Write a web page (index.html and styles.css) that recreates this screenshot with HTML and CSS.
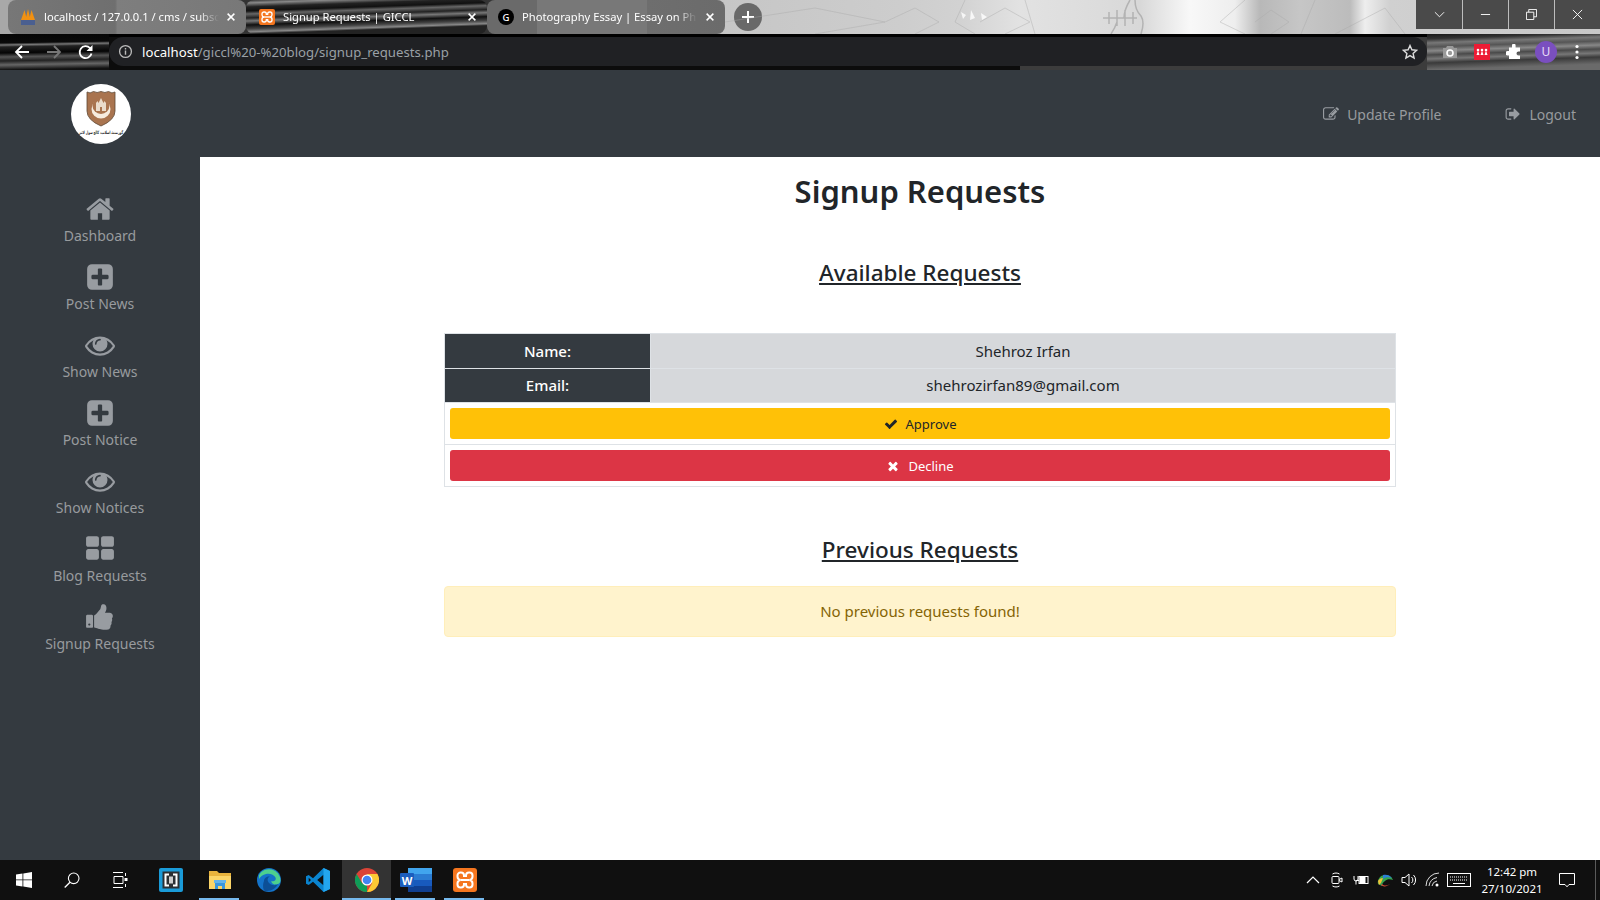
FILE: index.html
```html
<!DOCTYPE html>
<html lang="en">
<head>
  <meta charset="UTF-8" />
  <title>Signup Requests | GICCL</title>
  <link rel="stylesheet" href="styles.css">
</head>
<body>
  <!-- icon set -->
  <svg class="sprite" xmlns="http://www.w3.org/2000/svg">
    <symbol id="i-home" viewBox="0 0 1792 1792"><path d="M1472 992v480q0 26-19 45t-45 19h-384v-384h-256v384h-384q-26 0-45-19t-19-45v-480q0-1 .5-3t.5-3l575-474 575 474q1 2 1 6zm223-69l-62 74q-8 9-21 11h-3q-13 0-21-7l-692-577-692 577q-12 8-24 7-13-2-21-11l-62-74q-8-10-7-23.5t11-21.5l719-599q32-26 76-26t76 26l244 204v-195q0-14 9-23t23-9h192q14 0 23 9t9 23v408l219 182q10 8 11 21.5t-7 23.5z"/></symbol>
    <symbol id="i-plus" viewBox="0 0 1792 1792"><path d="M1408 960v-128q0-26-19-45t-45-19h-320v-320q0-26-19-45t-45-19h-128q-26 0-45 19t-19 45v320h-320q-26 0-45 19t-19 45v128q0 26 19 45t45 19h320v320q0 26 19 45t45 19h128q26 0 45-19t19-45v-320h320q26 0 45-19t19-45zm256-544v960q0 119-84.5 203.5t-203.5 84.5h-960q-119 0-203.5-84.5t-84.5-203.5v-960q0-119 84.5-203.5t203.5-84.5h960q119 0 203.5 84.5t84.5 203.5z"/></symbol>
    <symbol id="i-eye" viewBox="0 0 1792 1792"><path d="M1664 960q-152-236-381-353 61 104 61 225 0 185-131.5 316.5t-316.5 131.5-316.5-131.5-131.5-316.5q0-121 61-225-229 117-381 353 133 205 333.5 326.5t434.5 121.5 434.5-121.5 333.5-326.5zm-720-384q0-20-14-34t-34-14q-125 0-214.5 89.5t-89.5 214.5q0 20 14 34t34 14 34-14 14-34q0-86 61-147t147-61q20 0 34-14t14-34zm848 384q0 34-20 69-140 230-376.5 368.5t-499.5 138.5-499.5-139-376.5-368q-20-35-20-69t20-69q140-229 376.5-368t499.5-139 499.5 139 376.5 368q20 35 20 69z"/></symbol>
    <symbol id="i-grid" viewBox="0 0 1792 1792"><path d="M832 1024v384q0 52-38 90t-90 38h-512q-52 0-90-38t-38-90v-384q0-52 38-90t90-38h512q52 0 90 38t38 90zm0-768v384q0 52-38 90t-90 38h-512q-52 0-90-38t-38-90v-384q0-52 38-90t90-38h512q52 0 90 38t38 90zm896 768v384q0 52-38 90t-90 38h-512q-52 0-90-38t-38-90v-384q0-52 38-90t90-38h512q52 0 90 38t38 90zm0-768v384q0 52-38 90t-90 38h-512q-52 0-90-38t-38-90v-384q0-52 38-90t90-38h512q52 0 90 38t38 90z"/></symbol>
    <symbol id="i-thumb" viewBox="0 0 1792 1792"><path d="M320 1344q0-26-19-45t-45-19q-27 0-45.5 19t-18.5 45q0 27 18.5 45.5t45.5 18.5q26 0 45-18.5t19-45.5zm160-512v640q0 26-19 45t-45 19h-288q-26 0-45-19t-19-45v-640q0-26 19-45t45-19h288q26 0 45 19t19 45zm1184 0q0 86-55 149 15 44 15 76 3 76-43 137 17 56 0 117-15 57-54 94 9 112-49 181-64 76-197 78h-129q-66 0-144-15.5t-121.5-29-120.5-39.5q-123-43-158-44-26-1-45-19.5t-19-44.5v-641q0-25 18-43.5t43-20.5q24-2 76-59t101-121q68-87 101-120 18-18 31-48t17.5-48.5 13.5-60.5q7-39 12.5-61t19.5-52 34-50q19-19 45-19 46 0 82.5 10.5t60 26 40 40.5 24 45 12 50 5 45 .5 39q0 38-9.5 76t-19 60-27.5 56q-3 6-10 18t-11 22-8 24h277q78 0 135 57t57 135z"/></symbol>
    <symbol id="i-check" viewBox="0 0 1792 1792"><path d="M1671 566q0 40-28 68l-724 724-136 136q-28 28-68 28t-68-28l-136-136-362-362q-28-28-28-68t28-68l136-136q28-28 68-28t68 28l294 295 656-657q28-28 68-28t68 28l136 136q28 28 28 68z"/></symbol>
    <symbol id="i-times" viewBox="0 0 1792 1792"><path d="M1490 1322q0 40-28 68l-136 136q-28 28-68 28t-68-28l-294-294-294 294q-28 28-68 28t-68-28l-136-136q-28-28-28-68t28-68l294-294-294-294q-28-28-28-68t28-68l136-136q28-28 68-28t68 28l294 294 294-294q28-28 68-28t68 28l136 136q28 28 28 68t-28 68l-294 294 294 294q28 28 28 68z"/></symbol>
    <symbol id="i-edit" viewBox="0 0 1792 1792"><path d="M888 1184l116-116-152-152-116 116v56h96v96h56zm440-720q-16-16-33 1l-350 350q-17 17-1 33t33-1l350-350q17-17 1-33zm80 594v190q0 119-84.5 203.5t-203.5 84.5h-832q-119 0-203.5-84.5t-84.5-203.5v-832q0-119 84.5-203.5t203.5-84.5h832q63 0 117 25 15 7 18 23 3 17-9 29l-49 49q-14 14-32 8-23-6-45-6h-832q-66 0-113 47t-47 113v832q0 66 47 113t113 47h832q66 0 113-47t47-113v-126q0-13 9-22l64-64q15-15 35-7t20 29zm-96-738l288 288-672 672h-288v-288zm444 132l-92 92-288-288 92-92q28-28 68-28t68 28l152 152q28 28 28 68t-28 68z"/></symbol>
    <symbol id="i-logout" viewBox="0 0 1792 1792"><path d="M704 1440q0 4 1 20t.5 26.5-3 23.5-10 19.5-20.5 6.5h-320q-119 0-203.5-84.5t-84.5-203.5v-704q0-119 84.5-203.5t203.5-84.5h320q13 0 22.5 9.5t9.5 22.5q0 4 1 20t.5 26.5-3 23.5-10 19.5-20.5 6.5h-320q-66 0-113 47t-47 113v704q0 66 47 113t113 47h312l11.5 1 11.5 3 8 5.5 7 9 2 13.5zm928-544q0 26-19 45l-544 544q-19 19-45 19t-45-19-19-45v-288h-448q-26 0-45-19t-19-45v-384q0-26 19-45t45-19h448v-288q0-26 19-45t45-19 45 19l544 544q19 19 19 45z"/></symbol>
    <symbol id="i-close" viewBox="0 0 16 16"><path d="M3.500 3.500l9 9m0-9l-9 9" fill="none" stroke="currentColor" stroke-width="2"/></symbol>
    <symbol id="i-xampp" viewBox="0 0 24 24"><rect width="24" height="24" rx="3" fill="#f5761f"/><g fill="none" stroke="#fff" stroke-width="2"><path d="M11 9V7.500a3 3 0 0 0-3-3h-.5a3 3 0 0 0-3 3v1a3.500 3.500 0 0 0 3 3.500 3.500 3.500 0 0 0-3 3.500v1a3 3 0 0 0 3 3H8a3 3 0 0 0 3-3V15"/><path d="M13 9V7.500a3 3 0 0 1 3-3h.5a3 3 0 0 1 3 3v1a3.500 3.500 0 0 1-3 3.500 3.500 3.500 0 0 1 3 3.500v1a3 3 0 0 1-3 3H16a3 3 0 0 1-3-3V15"/><path d="M7.500 12h9"/></g></symbol>
  </svg>

  <div class="tabstrip">
    <svg class="strip-art" viewBox="0 0 692 34" preserveAspectRatio="none">
      <g fill="none" stroke="#a8a8a8" stroke-width="1" opacity=".4">
        <path d="M0 22L90 8l70 14-70 12M160 22l30-14 24 14-24 12M240 0l-10 22 20 12M255 22l25-14 25 14-25 12M300 0l10 34"/>
        <path d="M520 0l-25 22 25 12M530 22l16-12 18 12-18 12M590 0l-14 34M610 34l50-26 20 26"/>
      </g>
      <g fill="#ffffff" opacity=".8"><path d="M236 12l5 3-3 4zM246 10l4 8-5 2zM256 13l6 4-5 3z"/></g>
      <g fill="none" stroke="#9a9a9a" stroke-width="1.500" opacity=".6">
        <path d="M378 18h34M384 12v12M392 10v16M400 10v16M408 12v12M405 0q-6 10-6 18M410 0q0 10 6 16 4 6 0 18M386 34q4-6 6-12"/>
      </g>
    </svg>
    <div class="tab tab-first">
      <svg class="favicon" viewBox="0 0 16 16"><path d="M1 11L4.500 1 7 11zM5.500 11L8 0l2.500 11zM9 11l2.500-10L15 11z" fill="#f29111"/><rect x="1" y="11" width="14" height="5" fill="#4a5f90"/></svg>
      <span class="tab-title">localhost / 127.0.0.1 / cms / subscribers</span>
      <svg class="tab-close"><use href="#i-close"/></svg>
    </div>
    <div class="tab tab-active">
      <svg class="favicon"><use href="#i-xampp"/></svg>
      <span class="tab-title">Signup Requests | GICCL</span>
      <svg class="tab-close"><use href="#i-close"/></svg>
    </div>
    <div class="tab tab-third">
      <svg class="favicon" viewBox="0 0 16 16"><circle cx="8" cy="8" r="8" fill="#000"/><text x="8" y="11.500" class="favicon-g">G</text></svg>
      <span class="tab-title">Photography Essay | Essay on Photography</span>
      <svg class="tab-close"><use href="#i-close"/></svg>
    </div>
    <div class="new-tab">
      <svg viewBox="0 0 14 14"><path d="M7 1v12M1 7h12" stroke="#fff" stroke-width="2"/></svg>
    </div>
    <div class="win-controls">
      <div class="win-btn"><svg viewBox="0 0 12 12"><path d="M1 3.500l5 5 5-5" fill="none" stroke="#fff"/></svg></div>
      <div class="win-btn"><svg viewBox="0 0 12 12"><path d="M1 6h10" stroke="#fff"/></svg></div>
      <div class="win-btn"><svg viewBox="0 0 12 12"><path d="M.5 3.500h8v8h-8zM3 3.500v-3h8.500v8h-3" fill="none" stroke="#fff"/></svg></div>
      <div class="win-btn"><svg viewBox="0 0 12 12"><path d="M1 1l10 10m0-10L1 11" fill="none" stroke="#fff"/></svg></div>
    </div>
  </div>

  <div class="toolbar">
    <div class="nav-btns">
      <svg viewBox="0 0 16 16"><path d="M15 8H2m6-6L2 8l6 6" fill="none" stroke="#fff" stroke-width="1.800"/></svg>
      <svg viewBox="0 0 16 16"><path d="M1 8h13M8 2l6 6-6 6" fill="none" stroke="#777" stroke-width="1.800"/></svg>
      <svg viewBox="0 0 16 16"><path d="M13.500 9.500A6 6 0 1 1 12 4l1.500 1.500" fill="none" stroke="#fff" stroke-width="1.800"/><path d="M14.500 1v6h-6z" fill="#fff"/></svg>
    </div>
    <div class="omnibox">
      <svg class="info" viewBox="0 0 16 16"><circle cx="8" cy="8" r="6.300" fill="none" stroke="#bbb" stroke-width="1.400"/><path d="M8 7v4.500M8 4.300v1.500" stroke="#bbb" stroke-width="1.500"/></svg>
      <span class="url"><b>localhost</b>/giccl%20-%20blog/signup_requests.php</span>
      <svg class="star" viewBox="0 0 16 16"><path d="M8 1.500l1.900 4.300 4.700.5-3.500 3.100 1 4.600L8 11.600l-4.100 2.400 1-4.600-3.500-3.100 4.700-.5z" fill="none" stroke="#ddd" stroke-width="1.400"/></svg>
    </div>
    <div class="ext-icons">
      <svg viewBox="0 0 16 16"><path d="M1 4h3l1-2h6l1 2h3v10H1z" fill="#9a9a9a"/><circle cx="8" cy="9" r="3" fill="none" stroke="#fff" stroke-width="1.600"/></svg>
      <svg viewBox="0 0 16 16"><rect width="16" height="16" fill="#ec1c35"/><path d="M2.500 11L4 6.500 5.500 11zM6.500 11L8 6.500 9.500 11zM10.500 11L12 6.500 13.500 11z" fill="#fff"/><circle cx="4" cy="6" r="1.300" fill="#fff"/><circle cx="8" cy="6" r="1.300" fill="#fff"/><circle cx="12" cy="6" r="1.300" fill="#fff"/></svg>
      <svg viewBox="0 0 16 16"><path d="M6 1.500a1.800 1.800 0 0 1 3.600 0V3.500H14v4h-1.500a2 2 0 0 0 0 4H14V15H3v-3.500H1.500a2.200 2.200 0 0 1 0-4.400H3V3.500h3z" fill="#fff"/></svg>
      <div class="avatar">U</div>
      <svg class="dots" viewBox="0 0 4 16"><circle cx="2" cy="2.500" r="1.600" fill="#fff"/><circle cx="2" cy="8" r="1.600" fill="#fff"/><circle cx="2" cy="13.500" r="1.600" fill="#fff"/></svg>
    </div>
  </div>

  <div class="app">
    <aside class="sidebar">
      <div class="logo-wrap">
        <svg class="logo" viewBox="0 0 60 60">
          <circle cx="30" cy="30" r="30" fill="#fff"/>
          <path d="M16 8q3 2 6.500-.5 3.500 2 7.500 0 4 2 7.500 0Q41 10 44 8v19q0 9-14 15-14-6-14-15z" fill="#a9744f" stroke="#5d4632" stroke-width=".8"/>
          <circle cx="30" cy="25" r="9.500" fill="#f6ecdf"/>
          <circle cx="30" cy="21.500" r="8.500" fill="#a9744f"/>
          <path d="M25 27v-8l1.500-2 1 2 2.500-5 2.500 5 1-2 1.500 2v8z" fill="#eadccb"/>
          <path d="M29 27v-4h2v4z" fill="#a9744f"/>
          <text x="30" y="50" class="logo-text" textLength="44" lengthAdjust="spacingAndGlyphs">گورنمنٹ اسلامیہ کالج سول لائنز</text>
        </svg>
      </div>
      <nav class="side-nav">
        <a class="side-item"><svg><use href="#i-home"/></svg><span>Dashboard</span></a>
        <a class="side-item"><svg><use href="#i-plus"/></svg><span>Post News</span></a>
        <a class="side-item"><svg><use href="#i-eye"/></svg><span>Show News</span></a>
        <a class="side-item"><svg><use href="#i-plus"/></svg><span>Post Notice</span></a>
        <a class="side-item"><svg><use href="#i-eye"/></svg><span>Show Notices</span></a>
        <a class="side-item"><svg><use href="#i-grid"/></svg><span>Blog Requests</span></a>
        <a class="side-item"><svg><use href="#i-thumb"/></svg><span>Signup Requests</span></a>
      </nav>
    </aside>
    <div class="page">
      <header class="topbar">
        <a class="top-link"><svg><use href="#i-edit"/></svg>Update Profile</a>
        <a class="top-link"><svg><use href="#i-logout"/></svg>Logout</a>
      </header>
      <main class="content">
        <h1>Signup Requests</h1>
        <h2 class="available">Available Requests</h2>
        <table class="requests">
          <tr class="row-name">
            <th>Name:</th>
            <td>Shehroz Irfan</td>
          </tr>
          <tr class="row-email">
            <th>Email:</th>
            <td>shehrozirfan89@gmail.com</td>
          </tr>
          <tr class="row-approve">
            <td class="action" colspan="2"><button class="btn btn-approve" type="button"><svg><use href="#i-check"/></svg>Approve</button></td>
          </tr>
          <tr>
            <td class="action" colspan="2"><button class="btn btn-decline" type="button"><svg><use href="#i-times"/></svg>Decline</button></td>
          </tr>
        </table>
        <h2 class="previous">Previous Requests</h2>
        <div class="alert">No previous requests found!</div>
      </main>
    </div>
  </div>

  <footer class="taskbar">
    <div class="task-sys">
      <svg viewBox="0 0 16 16"><path d="M0 2.400l6.500-.9v6H0zM7.300 1.400L16 0v7.500H7.300zM0 8.300h6.500v6.200L0 13.600zM7.300 8.300H16V16l-8.700-1.400z" fill="#fff"/></svg>
      <svg viewBox="0 0 16 16"><circle cx="9.700" cy="6.300" r="5.300" fill="none" stroke="#fff" stroke-width="1.100"/><path d="M6 10.200L.7 15.500" stroke="#fff" stroke-width="1.300"/></svg>
      <svg viewBox="0 0 16 16"><path d="M1 .5h10M1 15.500h10M2 4.500h9v7H2zM13.500 1v3M13.500 12v3" fill="none" stroke="#fff"/><rect x="12.500" y="6" width="3" height="3" fill="#fff"/></svg>
    </div>
    <div class="task-apps">
      <div class="task-app">
        <svg viewBox="0 0 24 24"><rect width="24" height="24" rx="2" fill="#1a9bd8"/><rect x="3.500" y="3.500" width="17" height="17" fill="#2b2f33"/><path d="M10 6.500H6.500v11H10M14 6.500h3.500v11H14" fill="none" stroke="#fff" stroke-width="2"/><rect x="10" y="8.500" width="4" height="7" fill="#cfcfcf"/></svg>
      </div>
      <div class="task-app is-open">
        <svg viewBox="0 0 24 24"><path d="M1 3h8l2 2h12v16H1z" fill="#e8b33d"/><rect x="1" y="8" width="22" height="13" fill="#fbd568"/><path d="M7 21v-6h10v6h-3v-3h-4v3z" fill="#3a96dd"/><rect x="6" y="12" width="12" height="3" fill="#63b3ea"/></svg>
      </div>
      <div class="task-app">
        <svg viewBox="0 0 24 24"><circle cx="12" cy="12" r="12" fill="#1473c9"/><path d="M2 7a11.500 11.500 0 0 1 21.500 5.500c0 3-3 4.500-6 4-2-.4-3.500-2-3-3.500 3 1 5-1 4-3.500C17 7 13 5 9 6 6 6.700 3.500 8.500 2 11z" fill="#4dd08e"/><path d="M7 13c0-3 3-5 6-4.500-3.500 1-3 6 1 8 2 1 5 1 7-.5-2 4-6 7-11 7-2 0-3-.5-3-.5-1.500-3-1-7 0-9.500z" fill="#0c4f96"/></svg>
      </div>
      <div class="task-app">
        <svg viewBox="0 0 24 24"><path d="M17.500 0L24 3v18l-6.500 3L7 13.700 2.700 17 0 15.700V8.300L2.700 7 7 10.300zm0 6.800L11.200 12l6.300 5.200zM2.700 9.700v4.600L5 12z" fill="#0a84cf"/><path d="M17.500 0L24 3v18l-6.500 3z" fill="#23a6ef"/></svg>
      </div>
      <div class="task-app is-active">
        <svg viewBox="0 0 24 24"><circle cx="12" cy="12" r="12" fill="#db4437"/><path d="M12 24a12 12 0 0 1-10.400-18L7 15l5 3z" fill="#0f9d58"/><path d="M12 6h10.400A12 12 0 0 1 12 24l5.200-9z" fill="#fcc934"/><circle cx="12" cy="12" r="5.500" fill="#fff"/><circle cx="12" cy="12" r="4.300" fill="#4285f4"/></svg>
      </div>
      <div class="task-app is-open">
        <svg viewBox="0 0 32 24"><rect x="8" y="0" width="24" height="24" rx="1" fill="#185abd"/><rect x="8" y="0" width="24" height="6" fill="#41a5ee"/><rect x="8" y="6" width="24" height="6" fill="#2b7cd3"/><rect x="8" y="18" width="24" height="6" fill="#103f91"/><rect x="0" y="5" width="14" height="14" rx="1" fill="#1b5ebe"/><text x="7" y="16.500" class="word-w">W</text></svg>
      </div>
      <div class="task-app is-open">
        <svg><use href="#i-xampp"/></svg>
      </div>
    </div>
    <div class="tray">
      <svg viewBox="0 0 16 16"><path d="M2 11l6-6 6 6" fill="none" stroke="#fff" stroke-width="1.200"/></svg>
      <svg viewBox="0 0 16 16"><rect x="3" y="4.500" width="7" height="7" rx="1" fill="none" stroke="#fff"/><path d="M10 7.500l3-1.500v4l-3-1.500M3.500 2c2-1.300 5-1.300 7 0M3.500 14c2 1.300 5 1.300 7 0" fill="none" stroke="#fff"/></svg>
      <svg viewBox="0 0 16 16"><rect x="6" y="4.500" width="9" height="7" fill="none" stroke="#fff"/><rect x="6.500" y="5" width="6" height="6" fill="#fff"/><path d="M1 4v3a2 2 0 0 0 4 0V4M6 8.500H3v4" fill="none" stroke="#fff"/></svg>
      <svg viewBox="0 0 16 16"><path d="M1 12C0 8 3 3 8 3c4 0 7 2 8 5-3-1-6-1-8 1-2 1-3 3-3 5z" fill="#35a34f"/><path d="M6 3c3-1 7 0 9 3-3-1-7-1-9 1z" fill="#2d7ed6"/><path d="M1 9c1-2 3-3 5-3l-2 5-2 2z" fill="#f2c037"/><path d="M5 12c2 2 5 2 8 0-3 3-7 3-9 1z" fill="#de4d3a"/></svg>
      <svg viewBox="0 0 16 16"><path d="M1 5.500h3L8 2v12l-4-3.500H1zM10.500 5a4 4 0 0 1 0 6M12.500 3a7 7 0 0 1 0 10" fill="none" stroke="#fff"/></svg>
      <svg viewBox="0 0 16 16"><path d="M1 14a13 13 0 0 1 13-13M4 14a10 10 0 0 1 8-8.500M7 14a6 6 0 0 1 5-5" fill="none" stroke="#ddd"/><circle cx="12" cy="13" r="1.500" fill="#fff"/></svg>
      <svg class="kbd" viewBox="0 0 24 14"><rect x=".5" y=".5" width="23" height="13" fill="none" stroke="#fff"/><path d="M3 4h18M3 7h18" stroke="#fff" stroke-dasharray="1 1"/><path d="M6 10.500h12" stroke="#fff"/></svg>
    </div>
    <div class="clock"><span>12:42 pm</span><span>27/10/2021</span></div>
    <svg class="notify" viewBox="0 0 16 16"><path d="M.5 1.500h15v11h-5.500L8 14.800 6 12.500H.5z" fill="none" stroke="#fff"/></svg>
    <div class="show-desktop"></div>
  </footer>
</body>
</html>
```

FILE: styles.css
```css
* {
  box-sizing: border-box;
}
html, body {
  height: 100%;
}
body {
  margin: 0;
  width: 1600px;
  height: 900px;
  overflow: hidden;
  display: flex;
  flex-direction: column;
  font-family: "Noto Sans", "Open Sans", sans-serif;
  color: #212529;
  background: #fff;
}
.sprite {
  position: absolute;
  width: 0;
  height: 0;
}

/* browser chrome */
.tabstrip {
  position: relative;
  flex: 0 0 34px;
  display: flex;
  padding-left: 8px;
  background: linear-gradient(90deg, #a8a8a8 0, #a8a8a8 8px, #333 246px, #333 487px, #c6c6c6 725px, #cdcdcd 900px, #d2d2d2 960px, #e2e2e2 1020px, #dcdcdc 1100px, #d8d8d8 1140px, #f8f8f8 1190px, #eeeeee 1235px, #b8b8b8 1260px, #c6c6c6 1300px, #bcbcbc 1350px, #eeeeee 1365px, #d0d0d0 1390px, #c8c8c8 100%);
}
.strip-art {
  position: absolute;
  left: 725px;
  top: 0;
  width: 692px;
  height: 34px;
  filter: blur(.5px);
}
.tab {
  position: relative;
  height: 34px;
  display: flex;
  align-items: center;
  padding-left: 12px;
  border-radius: 8px;
  color: #fff;
  font-size: 11.200px;
}
.tab-first {
  width: 238px;
  background: linear-gradient(90deg, #777, #6f6f6f 45%, #7e7e7e 46%, #787878);
}
.tab-active {
  width: 241px;
  padding-left: 13px;
  background: linear-gradient(178deg, #333 0, #888 3px, #222 7px, #111 11px, #666 14px, #222 18px, #777 21px, #111 25px, #444 29px, #888 32px, #222 34px);
}
.tab-third {
  width: 238px;
  padding-left: 11px;
  background: linear-gradient(90deg, #6a6a6a 0, #6a6a6a 50px, #787878 50px, #787878 160px, #6e6e6e 160px, #6b6b6b 100%);
}
.favicon {
  flex: none;
  width: 16px;
  height: 16px;
  margin-right: 8px;
}
.favicon-g {
  fill: #fff;
  font-size: 9.500px;
  text-anchor: middle;
  font-weight: 500;
}
.tab-title {
  width: 175px;
  margin-top: -1px;
  overflow: hidden;
  white-space: nowrap;
  -webkit-mask-image: linear-gradient(90deg, #000 88%, transparent);
  mask-image: linear-gradient(90deg, #000 88%, transparent);
}
.tab-close {
  position: absolute;
  right: 9px;
  top: 11px;
  width: 12px;
  height: 12px;
  color: #fff;
}
.new-tab {
  width: 28px;
  height: 28px;
  margin: 3px 0 0 9px;
  border-radius: 50%;
  background: #696969;
  display: flex;
  align-items: center;
  justify-content: center;
}
.new-tab svg {
  width: 14px;
  height: 14px;
}
.win-controls {
  position: absolute;
  right: 0;
  top: 0;
  display: flex;
  height: 29px;
  background: #4a4a4a;
}
.win-btn {
  width: 46px;
  display: flex;
  align-items: center;
  justify-content: center;
  border-left: 1px solid #bdbdbd;
}
.win-btn:first-child {
  border-left: 0;
}
.win-btn svg {
  width: 11px;
  height: 11px;
}
.toolbar {
  flex: 0 0 36px;
  display: flex;
  padding-top: 3px;
  background: linear-gradient(180deg, #000 0, #000 3px, transparent 3px), linear-gradient(90deg, transparent 109px, #0c0c0c 109px, #0c0c0c 1020px, #3c3c3c 1020px);
}
.nav-btns {
  width: 109px;
  margin-top: -3px;
  display: flex;
  align-items: center;
  gap: 16px;
  padding-left: 14px;
  background: linear-gradient(179deg, #050505 0, #0a0a0a 9px, #777 11px, #222 13px, #050505 19px, #555 23px, #222 27px, #666 31px, #111 36px);
}
.nav-btns svg {
  width: 16px;
  height: 16px;
}
.omnibox {
  width: 1318px;
  height: 29px;
  display: flex;
  align-items: center;
  padding: 0 9px 0 9px;
  border-radius: 15px;
  background: #202124;
  color: #9aa0a6;
  font-size: 13.200px;
}
.info {
  width: 15px;
  height: 15px;
  margin-right: 9px;
}
.url b {
  color: #fff;
  font-weight: 400;
}
.star {
  width: 16px;
  height: 16px;
  margin-left: auto;
}
.ext-icons {
  flex: 1;
  height: 36px;
  margin-top: -3px;
  display: flex;
  align-items: center;
  padding-left: 15px;
  gap: 16px;
  background: linear-gradient(178deg, #1a1a1a 0, #333 5px, #777 9px, #555 13px, #888 17px, #4a4a4a 21px, #777 25px, #3a3a3a 29px, #6a6a6a 36px);
}
.ext-icons svg {
  width: 16px;
  height: 16px;
  flex: none;
}
.ext-icons .dots {
  width: 4px;
  margin-left: 2px;
}
.avatar {
  flex: none;
  width: 22px;
  height: 22px;
  margin-left: -3px;
  border-radius: 50%;
  background: #7a4fbf;
  color: #e8dcf8;
  font-size: 12px;
  line-height: 22px;
  text-align: center;
}

/* page */
.app {
  flex: 1;
  display: flex;
  min-height: 0;
}
.sidebar {
  flex: 0 0 200px;
  background: #343a40;
}
.logo-wrap {
  height: 124px;
  padding: 14px 0 0 71px;
}
.logo {
  display: block;
  width: 60px;
  height: 60px;
}
.logo-text {
  font-family: "DejaVu Sans", sans-serif;
  font-size: 4.500px;
  font-weight: 700;
  text-anchor: middle;
  fill: #222;
}
.side-item {
  height: 68px;
  display: flex;
  flex-direction: column;
  align-items: center;
  color: #989b9e;
  font-size: 14px;
  line-height: 24px;
}
.side-item svg {
  width: 30px;
  height: 30px;
  fill: #989ca1;
}
.page {
  flex: 1;
  display: flex;
  flex-direction: column;
  min-width: 0;
}
.topbar {
  flex: 0 0 87px;
  display: flex;
  align-items: center;
  justify-content: flex-end;
  gap: 64px;
  padding: 1px 24px 0 0;
  background: #343a40;
}
.top-link {
  display: flex;
  align-items: center;
  gap: 8px;
  color: #989b9e;
  font-size: 14px;
}
.top-link svg {
  width: 16px;
  height: 16px;
  fill: #989ca1;
}
.content {
  flex: 1;
  padding: 0 204px 0 244px;
}
h1, h2 {
  margin: 0;
  text-align: center;
}
h1 {
  margin-top: 12px;
  font-size: 31px;
  font-weight: 600;
  line-height: 44px;
}
h2 {
  font-size: 22.500px;
  font-weight: 500;
  line-height: 34px;
  text-decoration: underline;
}
.available {
  margin-top: 43px;
}
.requests {
  width: 100%;
  margin-top: 43px;
  border-collapse: collapse;
  font-size: 15px;
}
.requests th, .requests td {
  border: 1px solid #dee2e6;
  padding: 0;
  height: 34px;
  text-align: center;
}
.row-name th, .row-name td {
  height: 35px;
}
.row-email th, .row-email td {
  padding-bottom: 2px;
}
.requests th {
  width: 206px;
  background: #343a40;
  color: #fff;
  font-weight: 500;
}
.requests td {
  background: #d6d8db;
}
.requests td.action {
  height: 40px;
  padding: 5px;
  background: #fff;
}
.requests .row-approve td.action {
  height: 42px;
}
.btn {
  width: 100%;
  height: 31px;
  display: flex;
  align-items: center;
  justify-content: center;
  gap: 8px;
  border: 0;
  border-radius: 3px;
  font-family: inherit;
  font-size: 13px;
}
.btn svg {
  width: 14px;
  height: 14px;
}
.btn-approve {
  background: #ffc107;
  color: #212529;
}
.btn-approve svg {
  fill: #212529;
}
.btn-decline {
  background: #dc3545;
  color: #fff;
}
.btn-decline svg {
  fill: #fff;
}
.previous {
  margin-top: 46px;
}
.alert {
  height: 51px;
  margin-top: 19px;
  border: 1px solid #ffeeba;
  border-radius: 4px;
  background: #fff3cd;
  color: #856404;
  font-size: 15px;
  line-height: 49px;
  text-align: center;
}

/* taskbar */
.taskbar {
  flex: 0 0 40px;
  display: flex;
  align-items: center;
  background: #101010;
  color: #fff;
}
.task-sys {
  width: 146px;
  display: flex;
  flex: none;
}
.task-sys svg {
  width: 48px;
  height: 16px;
}
.task-apps {
  display: flex;
  height: 40px;
}
.task-app {
  position: relative;
  width: 49px;
  display: flex;
  align-items: center;
  justify-content: center;
}
.task-app svg {
  width: 24px;
  height: 24px;
}
.task-app:nth-child(6) svg {
  width: 32px;
}
.task-app.is-open::after {
  content: "";
  position: absolute;
  left: 4px;
  right: 5px;
  bottom: 0;
  height: 2px;
  background: #76b9ed;
}
.task-app.is-active {
  background: #333;
}
.task-app.is-active::after {
  content: "";
  position: absolute;
  left: 0;
  right: 0;
  bottom: 0;
  height: 2px;
  background: #76b9ed;
}
.word-w {
  fill: #fff;
  font-size: 11px;
  font-weight: 700;
  text-anchor: middle;
}
.tray {
  display: flex;
  align-items: center;
  margin-left: auto;
}
.tray svg {
  width: 16px;
  height: 16px;
  margin: 0 4px;
}
.tray .kbd {
  width: 24px;
  margin: 0 1px 0 2px;
}
.clock {
  width: 80px;
  display: flex;
  flex-direction: column;
  align-items: center;
  font-size: 11.500px;
  line-height: 17px;
}
.notify {
  width: 16px;
  height: 16px;
  margin: 0 20px 0 7px;
}
.show-desktop {
  width: 1px;
  height: 40px;
  margin-right: 4px;
  background: #5a5a5a;
}
```
